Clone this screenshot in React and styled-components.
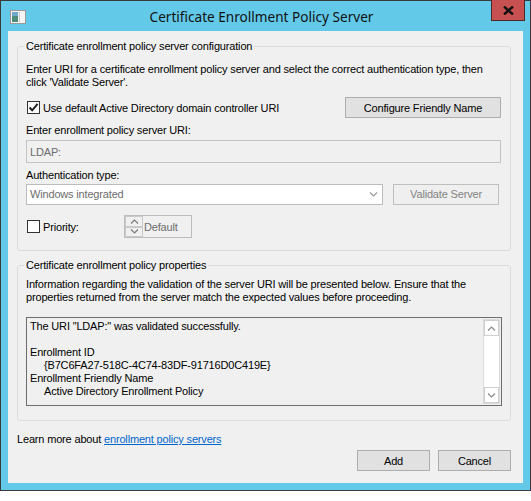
import React from "react";
import styled, { createGlobalStyle } from "styled-components";

const GlobalStyle = createGlobalStyle`
  body {
    margin: 0;
    background: #fff;
    font-family: "Liberation Sans", Arial, sans-serif;
    font-size: 11px;
    letter-spacing: -0.17px;
    color: #000;
  }
`;

const Window = styled.div`
  width: 531px;
  height: 491px;
  box-sizing: border-box;
  border: 1px solid #3a3a3a;
  background: #63c9e8;
  display: flex;
  flex-direction: column;
`;

const TitleBar = styled.div`
  height: 30px;
  display: grid;
  grid-template-columns: 1fr auto 1fr;
  align-items: center;
`;

const TitleIcon = styled.svg`
  margin-left: 9px;
  margin-top: 1px;
`;

const Title = styled.div`
  font-family: "Noto Sans", "Open Sans", sans-serif;
  font-size: 13.6px;
  letter-spacing: 0;
  color: #111;
  margin-top: 1px;
  padding-right: 8px;
`;

const CloseButton = styled.div`
  justify-self: end;
  align-self: start;
  margin-top: -1px;
  margin-right: 5px;
  width: 34px;
  height: 21px;
  box-sizing: border-box;
  background: #c75050;
  border: 1px solid #4a2a2a;
  border-top: none;
  display: flex;
  align-items: center;
  justify-content: center;
`;

const Client = styled.div`
  flex: 1;
  margin: 0 7px 7px;
  background: #f0f0f0;
  padding: 9px 12px 12px 9px;
  display: flex;
  flex-direction: column;
`;

const GroupBox = styled.fieldset`
  margin: ${(p) => (p.$first ? "0" : "8px 0 0")};
  padding: 0 9px ${(p) => p.$bottom}px 8px;
  border: 1px solid #dcdcdc;
  border-radius: 3px;
  min-width: 0;
  display: flex;
  flex-direction: column;
`;

const Legend = styled.legend`
  padding: 0 2px;
  margin-left: -2px;
  line-height: 13px;
  font-size: 11px;
`;

const Para = styled.div`
  margin-top: ${(p) => p.$top}px;
  line-height: 13px;
  white-space: nowrap;
`;

const Label = styled.div`
  margin-top: 6px;
  line-height: 13px;
`;

const Row = styled.div`
  display: flex;
  align-items: center;
  justify-content: ${(p) => p.$justify || "flex-start"};
  gap: ${(p) => p.$gap || 0}px;
  margin-top: ${(p) => p.$top || 0}px;
  height: ${(p) => p.$height}px;
`;

const CheckWrap = styled.label`
  display: flex;
  align-items: center;
  margin-left: 1px;
  gap: 3px;
  width: ${(p) => (p.$width ? p.$width + "px" : "auto")};
`;

const Box = styled.span`
  width: 13px;
  height: 13px;
  box-sizing: border-box;
  border: 1px solid #333;
  background: #fff;
  display: flex;
  align-items: center;
  justify-content: center;
`;

const Button = styled.div`
  width: ${(p) => p.$width}px;
  height: 21px;
  box-sizing: border-box;
  border: 1px solid ${(p) => (p.$disabled ? "#bfbfbf" : "#adadad")};
  background: ${(p) => (p.$disabled ? "#efefef" : "#e1e1e1")};
  color: ${(p) => (p.$disabled ? "#838383" : "#000")};
  display: flex;
  align-items: center;
  justify-content: center;
`;

const TextInput = styled.div`
  margin-top: 3px;
  height: 23px;
  box-sizing: border-box;
  border: 1px solid #c4c4c4;
  background: #f0f0f0;
  color: #6d6d6d;
  padding-left: 3px;
  display: flex;
  align-items: center;
`;

const Select = styled.div`
  width: 357px;
  height: 21px;
  box-sizing: border-box;
  border: 1px solid #bcbcbc;
  background: #fff;
  color: #6d6d6d;
  padding: 0 4px 0 3px;
  display: flex;
  align-items: center;
  justify-content: space-between;
`;

const Spin = styled.div`
  width: 68px;
  height: 23px;
  box-sizing: border-box;
  border: 1px solid #bcbcbc;
  display: flex;
  color: #6d6d6d;
`;

const SpinButtons = styled.div`
  width: 18px;
  display: flex;
  flex-direction: column;
`;

const SpinBtn = styled.div`
  flex: 1;
  border: 1px solid #c9c9c9;
  display: flex;
  align-items: center;
  justify-content: center;
`;

const SpinValue = styled.div`
  padding-left: 1px;
  display: flex;
  align-items: center;
`;

const ResultBox = styled.div`
  margin-top: 13px;
  height: 89px;
  width: 476px;
  box-sizing: border-box;
  border: 1px solid #6d6d6d;
  background: #f0f0f0;
  display: flex;
`;

const ResultText = styled.div`
  flex: 1;
  padding: 2px 3px;
  line-height: 13px;
  white-space: pre;
`;

const Indent = styled.div`
  padding-left: 14px;
`;

const ScrollBar = styled.div`
  width: 17px;
  margin: 1px 1px 1px 0;
  box-sizing: border-box;
  background: #fff;
  border: 1px solid #dadada;
  display: flex;
  flex-direction: column;
  justify-content: space-between;
`;

const ScrollBtn = styled.div`
  height: 16px;
  box-sizing: border-box;
  border: 1px solid #cfcfcf;
  display: flex;
  align-items: center;
  justify-content: center;
`;

const Footer = styled.div`
  margin-top: 12px;
  line-height: 13px;
`;

const Link = styled.a`
  color: #0066cc;
  text-decoration: underline;
`;

const Chevron = ({ up, color = "#7a7a7a" }) => (
  <svg width="9" height="5" viewBox="0 0 9 5">
    <polyline
      points={up ? "1,4.5 4.5,1 8,4.5" : "1,0.5 4.5,4 8,0.5"}
      fill="none"
      stroke={color}
      strokeWidth="1.2"
    />
  </svg>
);

const Check = () => (
  <svg width="11" height="11" viewBox="0 0 11 11">
    <path d="M1.5 5.5 L4.2 8.3 L9.6 1.8" fill="none" stroke="#222" strokeWidth="2" />
  </svg>
);

export default function App() {
  return (
    <>
      <GlobalStyle />
      <Window>
        <TitleBar>
          <TitleIcon width="16" height="14" viewBox="0 0 16 14">
            <rect x="0.5" y="0.5" width="15" height="13" fill="#f4f4f4" stroke="#9a9a9a" />
            <rect x="2" y="2" width="6" height="10" fill="#4e8d7a" />
            <rect x="2" y="2" width="6" height="4" fill="#6fa8c8" />
            <rect x="9" y="2" width="1" height="10" fill="#c8c8c8" />
          </TitleIcon>
          <Title>Certificate Enrollment Policy Server</Title>
          <CloseButton>
            <svg width="11" height="9" viewBox="0 0 11 9">
              <path d="M1 0.5 L10 8.5 M10 0.5 L1 8.5" stroke="#111" strokeWidth="2.4" />
            </svg>
          </CloseButton>
        </TitleBar>
        <Client>
          <GroupBox $first $bottom={12}>
            <Legend>Certificate enrollment policy server configuration</Legend>
            <Para $top={10}>
              Enter URI for a certificate enrollment policy server and select the correct authentication type, then
              <br />
              click 'Validate Server'.
            </Para>
            <Row $top={8} $height={21} $justify="space-between">
              <CheckWrap>
                <Box>
                  <Check />
                </Box>
                Use default Active Directory domain controller URI
              </CheckWrap>
              <Button $width={156}>Configure Friendly Name</Button>
            </Row>
            <Label>Enter enrollment policy server URI:</Label>
            <TextInput>LDAP:</TextInput>
            <Label>Authentication type:</Label>
            <Row $top={1} $height={22} $gap={10}>
              <Select>
                Windows integrated
                <Chevron color="#9a9a9a" />
              </Select>
              <Button $width={106} $disabled>
                Validate Server
              </Button>
            </Row>
            <Row $top={10} $height={23}>
              <CheckWrap $width={97}>
                <Box />
                Priority:
              </CheckWrap>
              <Spin>
                <SpinButtons>
                  <SpinBtn>
                    <Chevron up />
                  </SpinBtn>
                  <SpinBtn>
                    <Chevron />
                  </SpinBtn>
                </SpinButtons>
                <SpinValue>Default</SpinValue>
              </Spin>
            </Row>
          </GroupBox>
          <GroupBox $bottom={14}>
            <Legend>Certificate enrollment policy properties</Legend>
            <Para $top={6}>
              Information regarding the validation of the server URI will be presented below. Ensure that the
              <br />
              properties returned from the server match the expected values before proceeding.
            </Para>
            <ResultBox>
              <ResultText>
                <div>The URI "LDAP:" was validated successfully.</div>
                <div>&nbsp;</div>
                <div>Enrollment ID</div>
                <Indent>{"{B7C6FA27-518C-4C74-83DF-91716D0C419E}"}</Indent>
                <div>Enrollment Friendly Name</div>
                <Indent>Active Directory Enrollment Policy</Indent>
              </ResultText>
              <ScrollBar>
                <ScrollBtn>
                  <Chevron up color="#8a8a8a" />
                </ScrollBtn>
                <ScrollBtn>
                  <Chevron color="#8a8a8a" />
                </ScrollBtn>
              </ScrollBar>
            </ResultBox>
          </GroupBox>
          <Footer>
            Learn more about <Link href="#">enrollment policy servers</Link>
          </Footer>
          <Row $top={4} $height={21} $gap={8} $justify="flex-end">
            <Button $width={73}>Add</Button>
            <Button $width={73}>Cancel</Button>
          </Row>
        </Client>
      </Window>
    </>
  );
}
